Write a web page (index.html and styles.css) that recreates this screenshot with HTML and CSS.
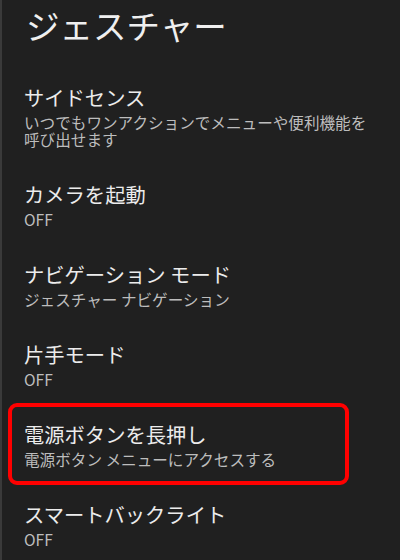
FILE: index.html
```html
<!DOCTYPE html>
<html lang="ja">
<head>
<meta charset="utf-8">
<link rel="stylesheet" href="styles.css">
</head>
<body>
<div class="screen">
  <h1 class="page-title">ジェスチャー</h1>
  <ul class="list">
    <li class="item">
      <div class="item-title">サイドセンス</div>
      <div class="item-sub">いつでもワンアクションでメニューや便利機能を呼び出せます</div>
    </li>
    <li class="item">
      <div class="item-title">カメラを起動</div>
      <div class="item-sub">OFF</div>
    </li>
    <li class="item">
      <div class="item-title">ナビゲーション モード</div>
      <div class="item-sub">ジェスチャー ナビゲーション</div>
    </li>
    <li class="item">
      <div class="item-title">片手モード</div>
      <div class="item-sub">OFF</div>
    </li>
    <li class="item highlighted">
      <div class="item-title">電源ボタンを長押し</div>
      <div class="item-sub">電源ボタン メニューにアクセスする</div>
      <span class="highlight-box"></span>
    </li>
    <li class="item">
      <div class="item-title">スマートバックライト</div>
      <div class="item-sub">OFF</div>
    </li>
  </ul>
</div>
</body>
</html>
```
FILE: styles.css
```css
html, body {
  margin: 0;
  padding: 0;
  background: #202020;
}
body {
  width: 400px;
  height: 560px;
  overflow: hidden;
  font-family: "Noto Sans CJK JP", "Noto Sans", sans-serif;
  color: #ececec;
}
.screen {
  height: 560px;
  border-left: 2px solid #3a3a3a;
  box-sizing: border-box;
}
.page-title {
  margin: 0;
  height: 67px;
  padding-left: 24px;
  font-size: 33.5px;
  font-weight: 400;
  line-height: 49px;
  color: #efefef;
}
.list {
  list-style: none;
  margin: 0;
  padding: 0;
}
.item {
  position: relative;
  padding: 16px 30px 16px 22px;
}
.item-title {
  font-size: 20.3px;
  line-height: 28px;
  margin-bottom: 3px;
  color: #ececec;
}
.item-sub {
  font-size: 15.6px;
  line-height: 17px;
  color: #bdbdbd;
}
.highlight-box {
  position: absolute;
  left: 6px;
  top: -1px;
  width: 341px;
  height: 82px;
  box-sizing: border-box;
  border: 4px solid #ff0000;
  border-radius: 9px;
  pointer-events: none;
}
```
